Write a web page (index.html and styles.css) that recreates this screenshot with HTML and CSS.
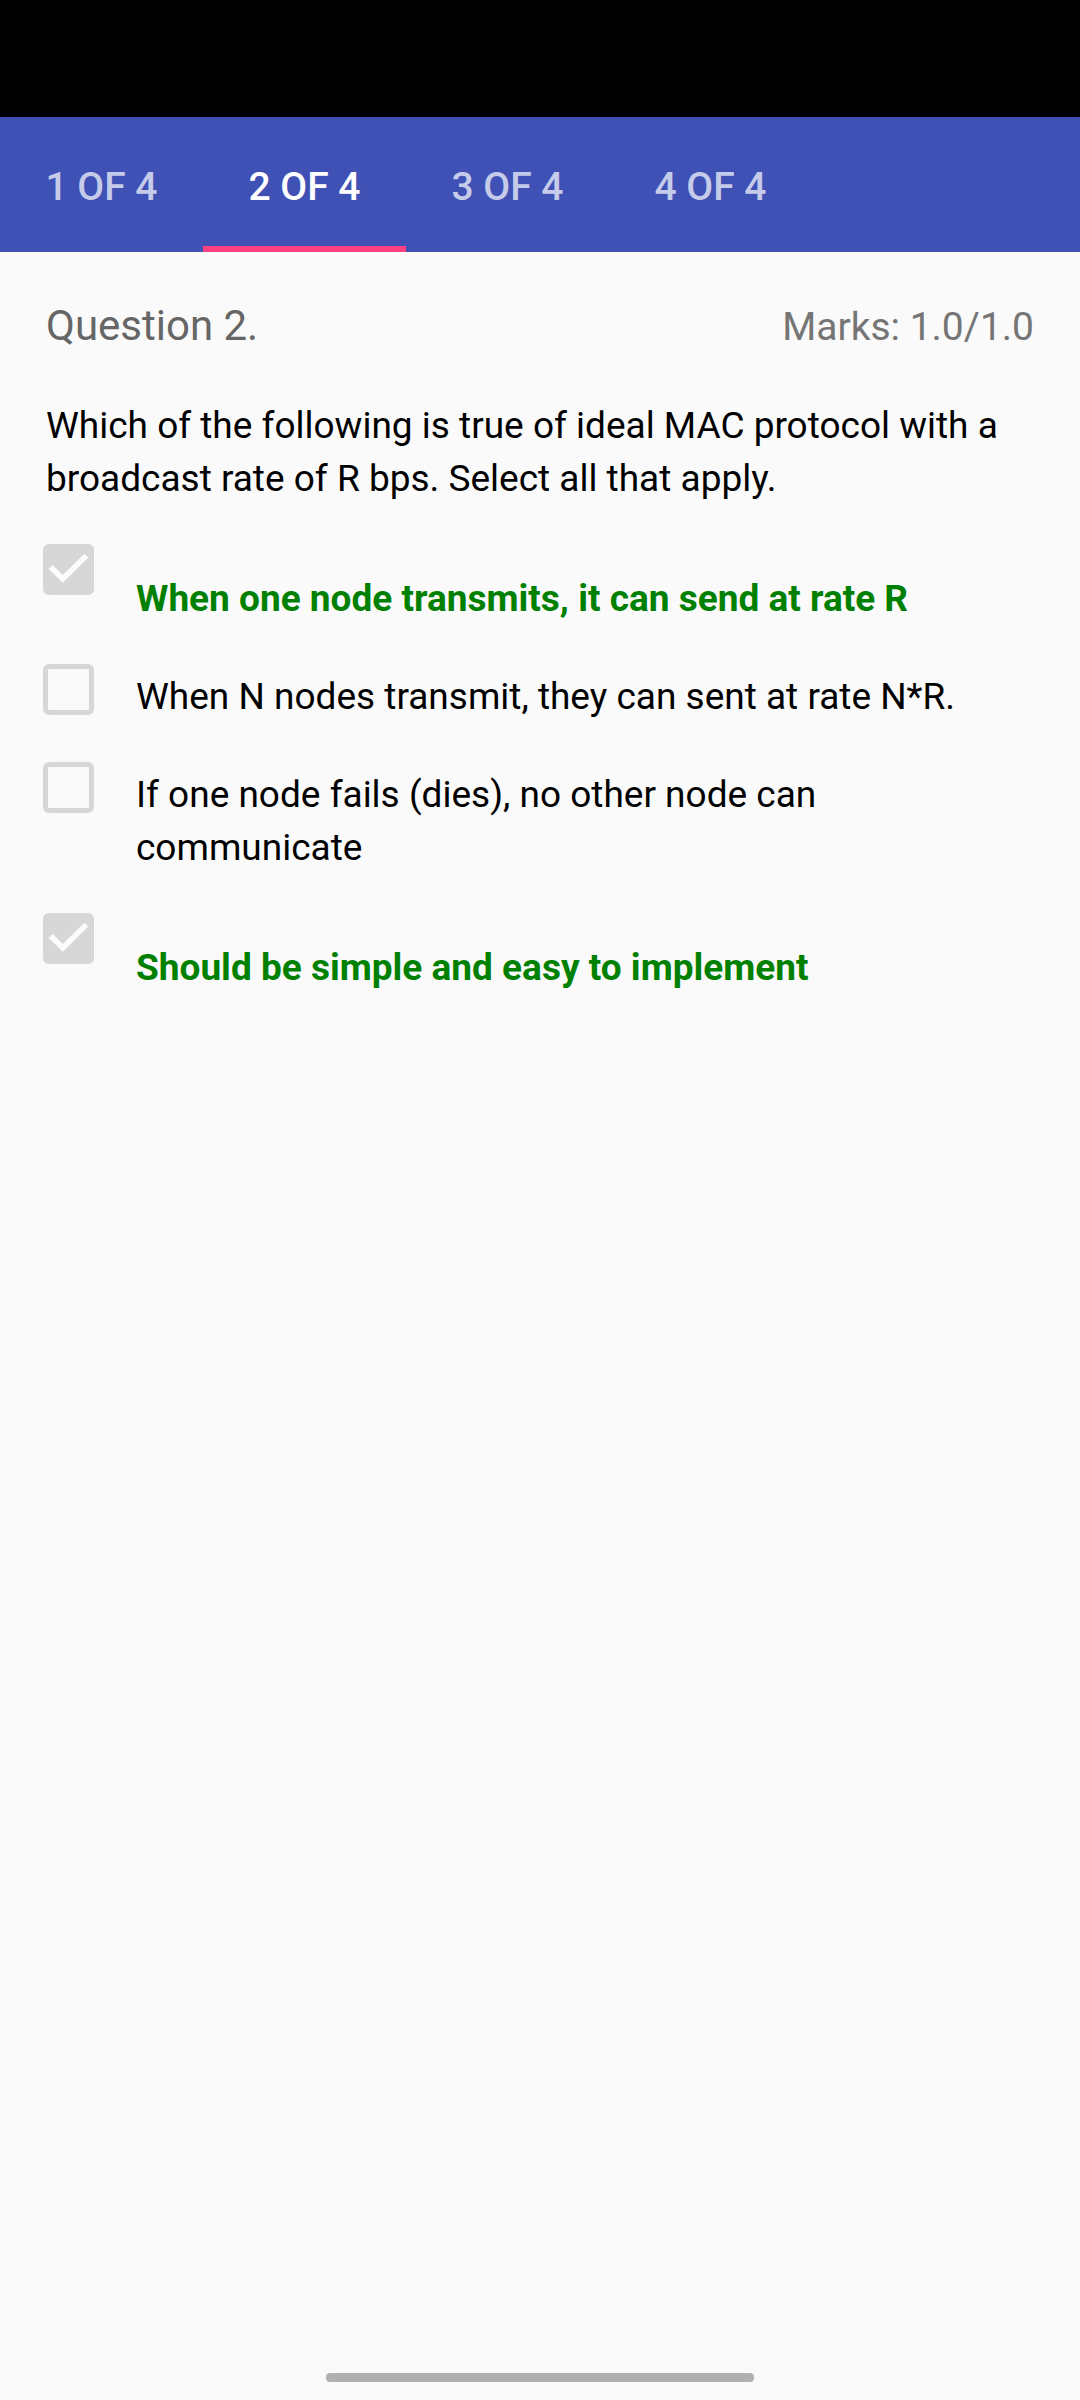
FILE: index.html
```html
<!DOCTYPE html>
<html lang="en">
<head>
<meta charset="utf-8">
<meta name="viewport" content="width=device-width">
<title>Quiz review</title>
<link rel="stylesheet" href="styles.css">
</head>
<body>
<div class="status-bar"></div>
<nav class="tabs" role="tablist">
  <button class="tab" role="tab">1 OF 4</button>
  <button class="tab tab-active" role="tab" aria-selected="true">2 OF 4</button>
  <button class="tab" role="tab">3 OF 4</button>
  <button class="tab" role="tab">4 OF 4</button>
</nav>
<main class="question">
  <header class="question-head">
    <h1 class="title">Question 2.</h1>
    <p class="marks">Marks: 1.0/1.0</p>
  </header>
  <p class="prompt">Which of the following is true of ideal MAC protocol with a broadcast rate of R bps. Select all that apply.</p>
  <div class="options">
    <div class="option option-correct">
      <input class="check" type="checkbox" id="a" checked disabled>
      <label class="answer" for="a">When one node transmits, it can send at rate R</label>
    </div>
    <div class="option">
      <input class="check" type="checkbox" id="b" disabled>
      <label class="answer" for="b">When N nodes transmit, they can sent at rate N*R.</label>
    </div>
    <div class="option">
      <input class="check" type="checkbox" id="c" disabled>
      <label class="answer" for="c">If one node fails (dies), no other node can communicate</label>
    </div>
    <div class="option option-correct">
      <input class="check" type="checkbox" id="d" checked disabled>
      <label class="answer" for="d">Should be simple and easy to implement</label>
    </div>
  </div>
</main>
<footer class="nav-bar"><div class="handle"></div></footer>
</body>
</html>
```
FILE: styles.css
```css
* { box-sizing: border-box; }
body {
  margin: 0;
  min-height: 100vh;
  display: flex;
  flex-direction: column;
  background: #fafafa;
  color: #000;
  font-family: Roboto, sans-serif;
}
h1, p { margin: 0; font-weight: 400; }
.status-bar { height: 117px; background: #000; }
.tabs { display: flex; height: 135px; background: #3f51b5; }
.tab {
  min-width: 203px;
  padding: 10px 45px 0;
  border: 0;
  border-bottom: 6px solid transparent;
  background: none;
  color: #c5cbe9;
  font: 500 39px/48px Roboto, sans-serif;
}
.tab-active { color: #fff; border-bottom-color: #ff4081; }
.question { flex: 1; padding: 49px 46px 48px; }
.question-head {
  display: flex;
  justify-content: space-between;
  align-items: baseline;
}
.title { color: #666; font-size: 42px; line-height: 50px; }
.marks { color: #757575; font-size: 39px; line-height: 50px; }
.prompt { margin-top: 47px; font-size: 37px; line-height: 53px; }
.options { margin-top: 39px; display: grid; gap: 39px; }
.option { display: flex; align-items: flex-start; gap: 42px; }
.answer { flex: 1; padding-top: 6px; font-size: 37px; line-height: 53px; }
.option-correct .answer { padding-top: 28px; color: #008000; font-weight: 700; }
.check {
  appearance: none;
  flex: none;
  width: 51px;
  height: 51px;
  margin: 0 0 0 -3px;
  border: 5px solid #d7d7d7;
  border-radius: 6px;
}
.check:checked {
  border: 0;
  background: #d7d7d7 url("data:image/svg+xml,%3Csvg xmlns='http://www.w3.org/2000/svg' viewBox='3 3 18 18'%3E%3Cpath d='M10 16.7L5 11.8l1.4-1.4 3.6 3.5 7.6-7.5L19 7.8z' fill='%23fcfcfc'/%3E%3C/svg%3E") center / 51px 51px no-repeat;
}
.nav-bar { display: flex; justify-content: center; padding-bottom: 18px; }
.handle { width: 428px; height: 9px; border-radius: 4px; background: #b0b0b0; }
```
